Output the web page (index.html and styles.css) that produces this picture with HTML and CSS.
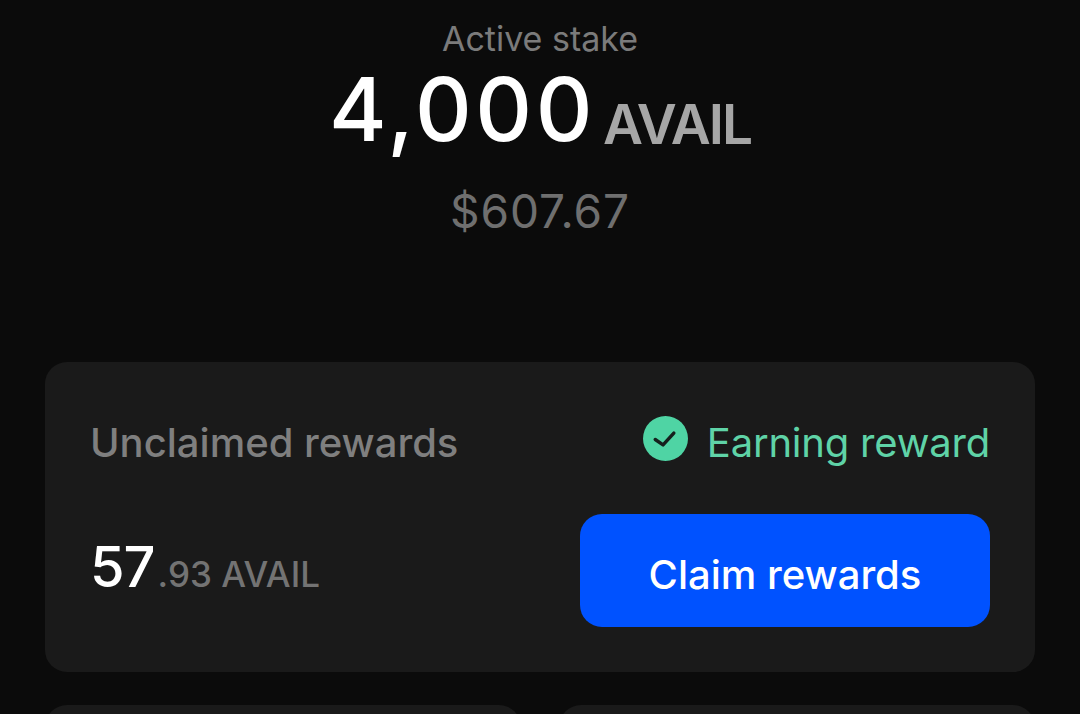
FILE: index.html
```html
<!DOCTYPE html>
<html lang="en">
<head>
  <meta charset="UTF-8">
  <meta name="viewport" content="width=device-width, initial-scale=1.0">
  <title>Active stake</title>
  <link rel="stylesheet" href="styles.css">
</head>
<body>
  <div class="container">
    <div class="stake">
      <div class="stake-label">Active stake</div>
      <div class="stake-amount"><span class="stake-value">4,000</span><span class="stake-unit">AVAIL</span></div>
      <div class="stake-usd">$607.67</div>
    </div>

    <div class="card rewards">
      <div class="rewards-row rewards-top">
        <span class="rewards-label">Unclaimed rewards</span>
        <span class="status">
          <svg class="status-icon" viewBox="0 0 46 46" aria-hidden="true">
            <circle cx="23" cy="23" r="23" fill="#4fd4a4"/>
            <path d="M12.5 24l8 5.5L31.5 17.5" fill="none" stroke="#16201d" stroke-width="3.5" stroke-linecap="round" stroke-linejoin="round"/>
          </svg>
          Earning reward
        </span>
      </div>
      <div class="rewards-row rewards-bottom">
        <div class="rewards-amount">
          <span class="rewards-whole">57</span><span class="rewards-rest">.93 AVAIL</span>
        </div>
        <button class="claim-btn">Claim rewards</button>
      </div>
    </div>

    <div class="lower-cards">
      <div class="card lower-card"></div>
      <div class="card lower-card"></div>
    </div>
  </div>
</body>
</html>
```

FILE: styles.css
```css
html, body {
  height: 100%;
}

body {
  margin: 0;
  padding: 0;
  background-color: #0b0b0b;
  font-family: Inter, "Noto Sans", sans-serif;
}

.container {
  height: 714px;
  padding: 0 45px;
  box-sizing: border-box;
  overflow: hidden;
}

.stake {
  display: flex;
  flex-direction: column;
  align-items: center;
  padding-top: 19px;
  height: 362px;
  box-sizing: border-box;
}

.stake-label {
  font-size: 34px;
  line-height: 40px;
  color: #7b7b7b;
}

.stake-amount {
  height: 96px;
  line-height: 96px;
  margin-top: 2px;
  white-space: nowrap;
}

.stake-value {
  font-size: 88px;
  font-weight: 500;
  color: #fff;
  letter-spacing: 3.5px;
}

.stake-unit {
  margin-left: 7px;
  font-size: 55px;
  font-weight: 600;
  color: #a6a6a6;
  letter-spacing: -2px;
  vertical-align: -3px;
}

.stake-usd {
  font-size: 46px;
  line-height: 54px;
  margin-top: 27px;
  color: #6f6f6f;
  letter-spacing: 1px;
}

.card {
  background-color: #1a1a1a;
  border-radius: 22px;
}

.rewards {
  height: 310px;
  padding: 51px 45px 45px 45px;
  box-sizing: border-box;
}

.rewards-row {
  display: flex;
  justify-content: space-between;
  align-items: center;
}

.rewards-top {
  height: 58px;
}

.rewards-bottom {
  margin-top: 43px;
}

.rewards-label {
  font-size: 40px;
  font-weight: 500;
  color: #7f7f7f;
}

.status {
  display: flex;
  align-items: center;
  gap: 19px;
  font-size: 40px;
  color: #5fd3a7;
  letter-spacing: -0.2px;
}

.status-icon {
  width: 45px;
  height: 45px;
  margin-bottom: 7px;
}

.rewards-amount {
  display: flex;
  align-items: baseline;
  margin-bottom: 8px;
}

.rewards-whole {
  font-size: 56px;
  font-weight: 500;
  color: #fff;
  letter-spacing: -1px;
}

.rewards-rest {
  font-size: 35px;
  font-weight: 500;
  color: #737373;
  margin-left: 3px;
}

.claim-btn {
  width: 410px;
  height: 113px;
  padding: 8px 0 0;
  border: none;
  border-radius: 22px;
  background-color: #0052ff;
  color: #fff;
  font-family: inherit;
  font-size: 40px;
  font-weight: 500;
}

.lower-cards {
  display: flex;
  gap: 38px;
  margin-top: 33px;
}

.lower-card {
  flex: 1;
  height: 120px;
}
```
